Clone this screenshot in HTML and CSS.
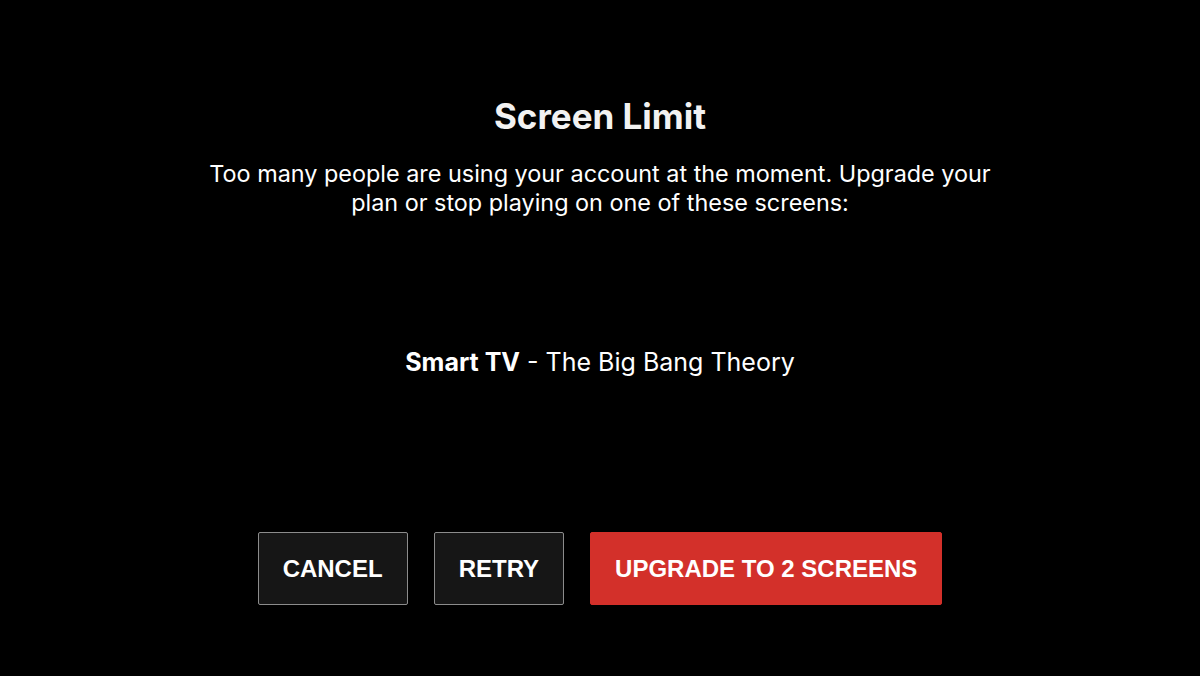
FILE: index.html
```html
<!DOCTYPE html>
<html lang="en">
<head>
  <meta charset="utf-8"/>
  <meta name="viewport" content="width=device-width, initial-scale=1.0"/>
  <title>Screen Limit</title>
  <link rel="stylesheet" href="styles.css">
</head>
<body>
  <main class="limit">
    <h1 class="limit-title">Screen Limit</h1>
    <p class="limit-text">Too many people are using your account at the moment. Upgrade your<br>plan or stop playing on one of these screens:</p>

    <ul class="screens">
      <li class="screen"><strong>Smart TV</strong> - The Big Bang Theory</li>
    </ul>

    <div class="actions">
      <button class="btn">CANCEL</button>
      <button class="btn">RETRY</button>
      <button class="btn btn-primary">UPGRADE TO 2 SCREENS</button>
    </div>
  </main>
</body>
</html>
```

FILE: styles.css
```css
html, body {
  margin: 0;
  height: 100%;
  background: #000;
}
body {
  font-family: Inter, "Open Sans", sans-serif;
  color: #fff;
}
.limit {
  display: flex;
  flex-direction: column;
  align-items: center;
  padding-top: 96px;
}
.limit-title {
  margin: 0;
  font-size: 35px;
  line-height: 40px;
  font-weight: 700;
  color: #f2f2f2;
}
.limit-text {
  margin: 23px 0 0;
  font-size: 23.4px;
  line-height: 29px;
  text-align: center;
}
.screens {
  list-style: none;
  margin: 130px 0 0;
  padding: 0;
}
.screen {
  font-size: 25px;
  line-height: 30px;
}
.screen strong { font-weight: 700; }
.actions {
  display: flex;
  gap: 26px;
  margin-top: 155px;
}
.btn {
  height: 73px;
  padding: 0 24px;
  background: #161616;
  border: 1px solid #8c8c8c;
  border-radius: 2px;
  color: #fff;
  font-family: "Liberation Sans", Arial, sans-serif;
  font-weight: 700;
  font-size: 24px;
  cursor: pointer;
}
.btn-primary {
  background: #d3302a;
  border-color: #d3302a;
}
```
